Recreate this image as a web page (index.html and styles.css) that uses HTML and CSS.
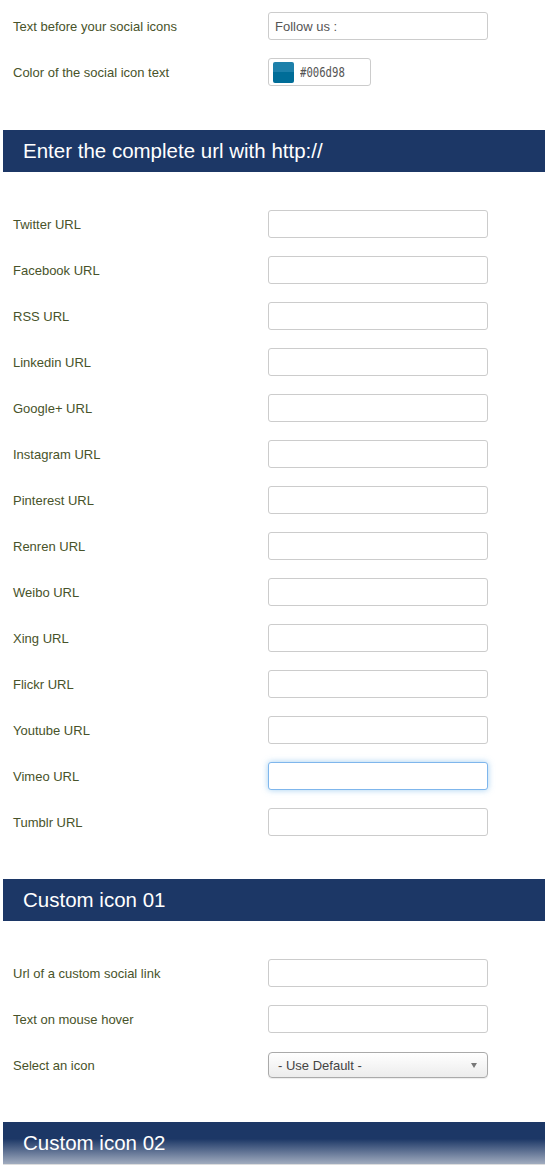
FILE: index.html
```html
<!DOCTYPE html>
<html lang="en">
<head>
    <meta charset="UTF-8">
    <meta name="viewport" content="width=device-width, initial-scale=1.0">
    <title>Social icons settings</title>
    <link rel="stylesheet" href="styles.css">
</head>
<body>

    <div class="fields first">
        <div class="row">
            <label for="before">Text before your social icons</label>
            <input type="text" id="before" value="Follow us :">
        </div>
        <div class="row">
            <label for="color">Color of the social icon text</label>
            <div class="color-input">
                <span class="swatch"></span>
                <span class="hex">#006d98</span>
            </div>
        </div>
    </div>

    <h2 class="band">Enter the complete url with http://</h2>

    <div class="fields">
        <div class="row"><label for="twitter">Twitter URL</label><input type="text" id="twitter"></div>
        <div class="row"><label for="facebook">Facebook URL</label><input type="text" id="facebook"></div>
        <div class="row"><label for="rss">RSS URL</label><input type="text" id="rss"></div>
        <div class="row"><label for="linkedin">Linkedin URL</label><input type="text" id="linkedin"></div>
        <div class="row"><label for="google">Google+ URL</label><input type="text" id="google"></div>
        <div class="row"><label for="instagram">Instagram URL</label><input type="text" id="instagram"></div>
        <div class="row"><label for="pinterest">Pinterest URL</label><input type="text" id="pinterest"></div>
        <div class="row"><label for="renren">Renren URL</label><input type="text" id="renren"></div>
        <div class="row"><label for="weibo">Weibo URL</label><input type="text" id="weibo"></div>
        <div class="row"><label for="xing">Xing URL</label><input type="text" id="xing"></div>
        <div class="row"><label for="flickr">Flickr URL</label><input type="text" id="flickr"></div>
        <div class="row"><label for="youtube">Youtube URL</label><input type="text" id="youtube"></div>
        <div class="row"><label for="vimeo">Vimeo URL</label><input type="text" id="vimeo" class="focused"></div>
        <div class="row"><label for="tumblr">Tumblr URL</label><input type="text" id="tumblr"></div>
    </div>

    <h2 class="band">Custom icon 01</h2>

    <div class="fields">
        <div class="row"><label for="custom1">Url of a custom social link</label><input type="text" id="custom1"></div>
        <div class="row"><label for="hover1">Text on mouse hover</label><input type="text" id="hover1"></div>
        <div class="row">
            <label for="icon1">Select an icon</label>
            <div class="select">
                <span>- Use Default -</span>
                <span class="arrow"></span>
            </div>
        </div>
    </div>

    <h2 class="band fade">Custom icon 02</h2>

</body>
</html>
```

FILE: styles.css
```css
body {
    margin: 0;
    font-family: "Liberation Sans", Arial, sans-serif;
    background: #fff;
}

/* Bloques de campos */
.fields {
    padding: 38px 0 7px 13px;
}
.fields.first {
    padding-top: 12px;
    padding-bottom: 8px;
}
.row {
    display: flex;
    align-items: center;
    height: 28px;
    margin-bottom: 18px;
}
.row label {
    width: 255px;
    font-size: 13px;
    color: #48532a;
}
.row input[type="text"] {
    box-sizing: border-box;
    width: 220px;
    height: 28px;
    padding: 4px 6px;
    border: 1px solid #ccc;
    border-radius: 3px;
    font-family: inherit;
    font-size: 13px;
    color: #555;
    outline: none;
}
.row input.focused {
    border-color: #7fb6ec;
    box-shadow: 0 0 6px rgba(102, 175, 233, 0.6);
}

/* Selector de color */
.color-input {
    box-sizing: border-box;
    width: 103px;
    height: 28px;
    border: 1px solid #ccc;
    border-radius: 3px;
    display: flex;
    align-items: center;
    padding-left: 4px;
}
.swatch {
    width: 21px;
    height: 21px;
    border-radius: 2px;
    background: linear-gradient(#1d80aa 50%, #006d98 50%);
}
.hex {
    display: inline-block;
    margin-left: 6px;
    font-family: "DejaVu Sans Mono", monospace;
    font-size: 14px;
    color: #555;
    transform: scaleX(0.76);
    transform-origin: left center;
}

/* Lista desplegable */
.select {
    box-sizing: border-box;
    width: 220px;
    height: 26px;
    border: 1px solid #aaa;
    border-radius: 4px;
    background: linear-gradient(#fff, #ececec);
    display: flex;
    align-items: center;
    justify-content: space-between;
    padding: 0 10px 0 9px;
    font-size: 13px;
    color: #444;
    box-shadow: 0 1px 1px rgba(0, 0, 0, 0.08);
}
.arrow {
    width: 0;
    height: 0;
    border-left: 3.5px solid transparent;
    border-right: 3.5px solid transparent;
    border-top: 5px solid #777;
}

/* Barras de titulo */
.band {
    margin: 18px 0 0 3px;
    height: 42px;
    line-height: 42px;
    padding-left: 20px;
    background: #1c3766;
    color: #fff;
    font-size: 20.5px;
    font-weight: normal;
}
.band.fade {
    background: linear-gradient(#1c3766 40%, #a1acbf);
    border-bottom: 1px solid #ddd;
}
```
